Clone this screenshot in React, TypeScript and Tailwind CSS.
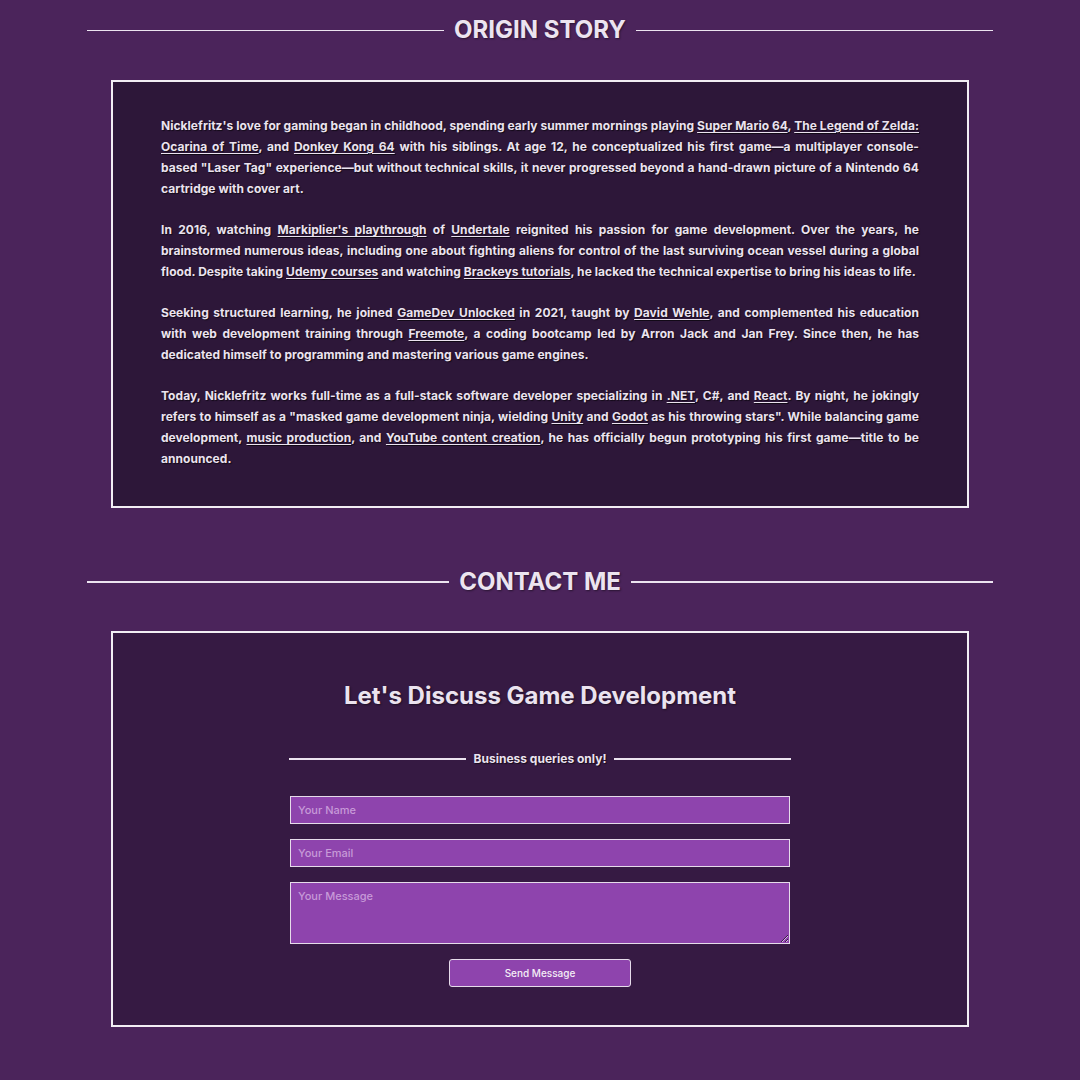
import React from 'react';

const L: React.FC<{ children: React.ReactNode }> = ({ children }) => (
  <a href="#" className="underline underline-offset-2 decoration-1">{children}</a>
);

const SectionTitle: React.FC<{ title: string; thick?: boolean }> = ({ title, thick }) => (
  <div className="flex items-center gap-2.5">
    <div className={`flex-1 bg-[#ece4f0] ${thick ? 'h-[2px]' : 'h-px'}`} />
    <h2 className="text-[24px] leading-9 font-bold text-[#ece4f0] [text-shadow:1px_1px_2px_rgba(0,0,0,0.45)]">{title}</h2>
    <div className={`flex-1 bg-[#ece4f0] ${thick ? 'h-[2px]' : 'h-px'}`} />
  </div>
);

export default function App() {
  return (
    <div className="min-h-screen bg-[#4b245b] font-['Inter',_'Liberation_Sans',_sans-serif] text-[#ebe3ef]">
      <div className="w-[906px] mx-auto pt-3 pb-14">
        <SectionTitle title="ORIGIN STORY" />

        <div className="mx-6 mt-8 border-2 border-[#f2eef4] bg-[#2d1739] px-12 pt-[33px] pb-[37px] text-[12px] leading-[21px] font-bold tracking-[0.05px] text-justify [text-shadow:1px_1px_1px_rgba(0,0,0,0.6)]">
          <p className="mb-5 tracking-[0.04px]">
            Nicklefritz's love for gaming began in childhood, spending early summer mornings playing <L>Super Mario 64</L>, <L>The Legend of Zelda: Ocarina of Time</L>, and <L>Donkey Kong 64</L> with his siblings. At age 12, he conceptualized his first game—a multiplayer console-based "Laser Tag" experience—but without technical skills, it never progressed beyond a hand-drawn picture of a Nintendo 64 cartridge with cover art.
          </p>
          <p className="mb-5">
            In 2016, watching <L>Markiplier's playthrough</L> of <L>Undertale</L> reignited his passion for game development. Over the years, he brainstormed numerous ideas, including one about fighting aliens for control of the last surviving ocean vessel during a global flood. Despite taking <L>Udemy courses</L> and watching <L>Brackeys tutorials</L>, he lacked the technical expertise to bring his ideas to life.
          </p>
          <p className="mb-5">
            Seeking structured learning, he joined <L>GameDev Unlocked</L> in 2021, taught by <L>David Wehle</L>, and complemented his education with web development training through <L>Freemote</L>, a coding bootcamp led by Arron Jack and Jan Frey. Since then, he has dedicated himself to programming and mastering various game engines.
          </p>
          <p>
            Today, Nicklefritz works full-time as a full-stack software developer specializing in <L>.NET</L>, C#, and <L>React</L>. By night, he jokingly refers to himself as a "masked game development ninja, wielding <L>Unity</L> and <L>Godot</L> as his throwing stars". While balancing game development, <L>music production</L>, and <L>YouTube content creation</L>, he has officially begun prototyping his first game—title to be announced.
          </p>
        </div>

        <div className="mt-14">
          <SectionTitle title="CONTACT ME" thick />
        </div>

        <div className="mx-6 mt-[31px] border-2 border-[#f2eef4] bg-[#361a43] pt-[47px] pb-[38px] flex flex-col items-center">
          <h3 className="text-[24px] leading-8 font-bold text-[#ebe3ef] [text-shadow:1px_1px_2px_rgba(0,0,0,0.45)]">Let's Discuss Game Development</h3>

          <div className="mt-[38px] w-[502px] flex items-center gap-2">
            <div className="flex-1 h-[2px] bg-[#ece4f0]" />
            <span className="text-[12px] leading-[18px] font-bold [text-shadow:1px_1px_1px_rgba(0,0,0,0.6)]">Business queries only!</span>
            <div className="flex-1 h-[2px] bg-[#ece4f0]" />
          </div>

          <form className="mt-[28px] w-[500px] flex flex-col items-center gap-[15px]" onSubmit={(e) => e.preventDefault()}>
            <input
              type="text"
              placeholder="Your Name"
              className="w-full h-7 px-[7px] bg-[#8e44ad] border border-[#e6dcea] text-[11px] font-medium text-white placeholder:text-[#c79ad8] outline-none"
            />
            <input
              type="email"
              placeholder="Your Email"
              className="w-full h-7 px-[7px] bg-[#8e44ad] border border-[#e6dcea] text-[11px] font-medium text-white placeholder:text-[#c79ad8] outline-none"
            />
            <textarea
              placeholder="Your Message"
              className="w-full h-[62px] px-[7px] py-[5px] bg-[#8e44ad] border border-[#e6dcea] text-[11px] leading-[16px] font-medium text-white placeholder:text-[#c79ad8] outline-none"
            />
            <button
              type="submit"
              className="w-[182px] h-7 bg-[#8e44ad] border border-[#e6dcea] rounded-[3px] text-[10px] font-medium text-[#f4eef6]"
            >
              Send Message
            </button>
          </form>
        </div>
      </div>
    </div>
  );
}
